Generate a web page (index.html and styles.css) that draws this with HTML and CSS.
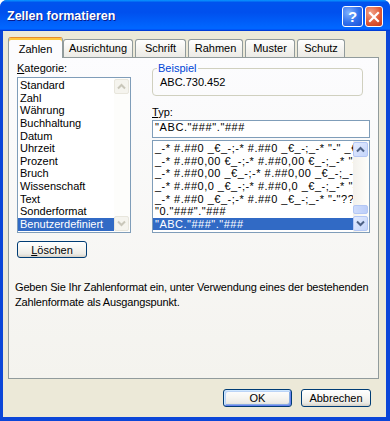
FILE: index.html
```html
<!DOCTYPE html>
<html lang="de">
<head>
<meta charset="utf-8">
<title>Zellen formatieren</title>
<link rel="stylesheet" href="styles.css">
</head>
<body>
<div class="window">
  <div class="titlebar">
    <span class="title">Zellen formatieren</span>
    <div class="tb-buttons">
      <span class="tb-btn help">?</span>
      <span class="tb-btn close"><svg width="12" height="12" viewBox="0 0 12 12"><path d="M2 2 L10 10 M10 2 L2 10" stroke="#fff" stroke-width="2.2" stroke-linecap="square"/></svg></span>
    </div>
  </div>
  <div class="frame-body">
    <div class="tabs">
      <div class="tab active t1">Zahlen</div>
      <div class="tab t2">Ausrichtung</div>
      <div class="tab t3">Schrift</div>
      <div class="tab t4">Rahmen</div>
      <div class="tab t5">Muster</div>
      <div class="tab t6">Schutz</div>
    </div>
    <div class="panel">
      <div class="cols">
        <div class="left">
          <div class="label"><u>K</u>ategorie:</div>
          <div class="listbox cat">
            <div class="items">
              <div class="item">Standard</div>
              <div class="item">Zahl</div>
              <div class="item">Währung</div>
              <div class="item">Buchhaltung</div>
              <div class="item">Datum</div>
              <div class="item">Uhrzeit</div>
              <div class="item">Prozent</div>
              <div class="item">Bruch</div>
              <div class="item">Wissenschaft</div>
              <div class="item">Text</div>
              <div class="item">Sonderformat</div>
              <div class="item selected">Benutzerdefiniert</div>
            </div>
            <div class="vscroll disabled">
              <span class="sb-btn"><svg width="15" height="15" viewBox="0 0 15 15"><polyline points="4,9.5 7.5,6 11,9.5" fill="none" stroke="#C9C7BA" stroke-width="2"/></svg></span>
              <span class="sb-track"></span>
              <span class="sb-btn"><svg width="15" height="15" viewBox="0 0 15 15"><polyline points="4,5.5 7.5,9 11,5.5" fill="none" stroke="#C9C7BA" stroke-width="2"/></svg></span>
            </div>
          </div>
          <button class="btn del"><u>L</u>öschen</button>
        </div>
        <div class="right">
          <fieldset class="group">
            <legend>Beispiel</legend>
            <div class="sample">ABC.730.452</div>
          </fieldset>
          <div class="label typ"><u>T</u>yp:</div>
          <div class="textbox">"ABC."###"."###</div>
          <div class="listbox fmt">
            <div class="items">
              <div class="item">_-* #.##0 _€_-;-* #.##0 _€_-;_-* "-" _€_-;_-@_-</div>
              <div class="item">_-* #.##0,00 €_-;-* #.##0,00 €_-;_-* "-"?? €_-;_-@_-</div>
              <div class="item">_-* #.##0,00 _€_-;-* #.##0,00 _€_-;_-* "-"?? _€_-;_-@_-</div>
              <div class="item">_-* #.##0,0 _€_-;-* #.##0,0 _€_-;_-* "-"? _€_-;_-@_-</div>
              <div class="item">_-* #.##0 _€_-;-* #.##0 _€_-;_-* "-"?? _€_-;_-@_-</div>
              <div class="item">"0."###"."###</div>
              <div class="item selected">"ABC."###"."###</div>
            </div>
            <div class="vscroll">
              <span class="sb-btn"><svg width="15" height="15" viewBox="0 0 15 15"><polyline points="4,9.5 7.5,6 11,9.5" fill="none" stroke="#4D6185" stroke-width="2"/></svg></span>
              <span class="sb-track"><span class="sb-thumb"></span></span>
              <span class="sb-btn"><svg width="15" height="15" viewBox="0 0 15 15"><polyline points="4,5.5 7.5,9 11,5.5" fill="none" stroke="#4D6185" stroke-width="2"/></svg></span>
            </div>
          </div>
        </div>
      </div>
      <p class="hint">Geben Sie Ihr Zahlenformat ein, unter Verwendung eines der bestehenden<br>Zahlenformate als Ausgangspunkt.</p>
    </div>
    <div class="actions">
      <button class="btn default ok">OK</button>
      <button class="btn cancel">Abbrechen</button>
    </div>
  </div>
</div>
</body>
</html>
```

FILE: styles.css
```css
* { box-sizing: border-box; margin: 0; padding: 0; }
html, body { width: 390px; height: 421px; overflow: hidden; background: #ffffff; }
body { font-family: "Liberation Sans", Arial, sans-serif; font-size: 11px; color: #000; }

.window {
  width: 390px; height: 421px;
  display: flex; flex-direction: column;
  background: #0B46D8;
  border-radius: 7px 7px 0 0;
  overflow: hidden;
}

.titlebar {
  height: 31px; flex: none;
  display: flex; align-items: center; justify-content: space-between;
  padding: 0 7px;
  background: linear-gradient(180deg, #0997ff, #0053ee 8%, #0050ee 40%, #0066ff 88%, #0066ff 93%, #005bff 95%, #003dd7 96%, #003dd7);
}
.title { color: #fff; font-weight: bold; font-size: 12.5px; text-shadow: 1px 1px 0 #0A1C8C; }
.tb-buttons { display: flex; gap: 2px; align-self: flex-start; margin-top: 6px; }
.tb-btn {
  width: 21px; height: 21px;
  border: 1px solid #fff; border-radius: 3px;
  display: flex; align-items: center; justify-content: center;
  color: #fff; font-weight: bold; font-size: 15px; line-height: 1;
}
.help { background: radial-gradient(circle at 30% 30%, #7FB2FF, #2F6FEC 55%, #1A4FD6); }
.close { width: 18px; background: radial-gradient(circle at 30% 30%, #F3A58C, #E05A36 55%, #C4391B); }

.frame-body {
  flex: 1;
  margin: 0 4px 4px 3px;
  background: #ECE9D8;
  display: flex; flex-direction: column;
  padding: 6px 7px 0 5px;
}

.tabs {
  display: flex; align-items: flex-end; gap: 2px;
  height: 21px; margin-bottom: -1px;
  position: relative; z-index: 1;
}
.tab {
  height: 18px; margin-bottom: 1px;
  border: 1px solid #919B9C; border-bottom: 0;
  border-radius: 3px 3px 0 0;
  background: linear-gradient(#ffffff, #F3F2EE 60%, #ECEBE6);
  display: flex; align-items: center; justify-content: center;
  line-height: 13px; white-space: nowrap;
}
.tab.active {
  height: 21px; margin-bottom: 0;
  background: #FCFCFE;
  border-top: 1px solid #E68B2C;
  box-shadow: inset 0 2px 0 #FFC73C;
  padding-top: 2px;
}
.t1 { width: 55px; }
.t2 { width: 70px; margin-left: -2px; }
.t3 { width: 51px; }
.t4 { width: 55px; }
.t5 { width: 50px; }
.t6 { width: 48px; }

.panel {
  height: 322px; flex: none;
  border: 1px solid #919B9C;
  background: linear-gradient(#FCFCFE, #F4F3EE);
  padding: 4px 8px 0 6px;
  display: flex; flex-direction: column;
}
.cols { display: flex; gap: 21px; padding-left: 2px; }
.left { width: 114px; display: flex; flex-direction: column; align-items: flex-start; }
.right { width: 218px; display: flex; flex-direction: column; align-items: flex-start; }
.label { line-height: 13px; height: 13px; }
.label u, .btn u { text-decoration: underline; }

.listbox { border: 1px solid #7F9DB9; background: #fff; display: flex; }
.cat { width: 114px; height: 156px; margin-top: 2px; }
.fmt { width: 218px; height: 93px; margin-top: 2px; }
.items { flex: 1; min-width: 0; padding-top: 1px; overflow: hidden; }
.item { height: 12.65px; line-height: 12.65px; padding-left: 2px; white-space: nowrap; overflow: hidden; }
.item.selected { background: #316AC5; color: #fff; }
.fmt .item { letter-spacing: 0.5px; }

.vscroll {
  width: 16px; flex: none;
  display: flex; flex-direction: column;
  padding: 1px 1px 1px 0;
  background: linear-gradient(90deg, #F3F1EC, #FEFEFB);
}
.sb-btn {
  width: 15px; height: 15px; flex: none;
  border: 1px solid #B4C7F5; border-radius: 2px;
  background: linear-gradient(135deg, #E3EBFE, #C4D5FB);
  display: flex; align-items: center; justify-content: center;
}
.sb-btn svg { flex: none; }
.sb-track { flex: 1; display: flex; flex-direction: column; justify-content: flex-end; padding-bottom: 2px; }
.sb-thumb {
  height: 9px; width: 15px;
  border: 1px solid #B4C7F5; border-radius: 2px;
  background: linear-gradient(90deg, #CFDCFC, #BCCEF9);
}
.vscroll.disabled { background: #FDFDFB; }
.vscroll.disabled .sb-btn { border-color: #E8E6DC; background: #F5F4EE; }

.btn {
  font: inherit; color: #000;
  height: 18px;
  border: 1px solid #003C74; border-radius: 3px;
  background: linear-gradient(#FFFFFF, #F5F4F0 50%, #ECEBE6 80%, #D6D0C5);
  line-height: 14px;
}
.del { width: 70px; height: 17px; margin-top: 8px; }
.default {
  box-shadow: inset 1px 1px 0 #CEE7FF, inset -1px -1px 0 #6982EE, inset 2px 2px 0 #BCD4F6, inset -2px -2px 0 #89ADE4;
}

.group {
  width: 211px; min-width: 0;
  border: 1px solid #D0D0BF; border-radius: 4px;
  padding: 0 4px 6px 4px; margin: 0;
}
.group legend { color: #0046D5; padding: 0 1px; line-height: 13px; }
.sample { line-height: 13px; margin: 1px 0 0 3px; }

.typ { margin-top: 10px; }
.textbox {
  width: 218px; height: 18px; margin-top: 1px;
  border: 1px solid #7F9DB9; background: #fff;
  padding: 0 2px; line-height: 13px; white-space: nowrap;
  letter-spacing: 0.6px;
}

.hint { margin-top: 22px; line-height: 15px; white-space: nowrap; letter-spacing: -0.15px; }

.actions { display: flex; justify-content: flex-end; gap: 9px; margin-top: 10px; padding-right: 8px; }
.ok { width: 69px; }
.cancel { width: 70px; }
```
